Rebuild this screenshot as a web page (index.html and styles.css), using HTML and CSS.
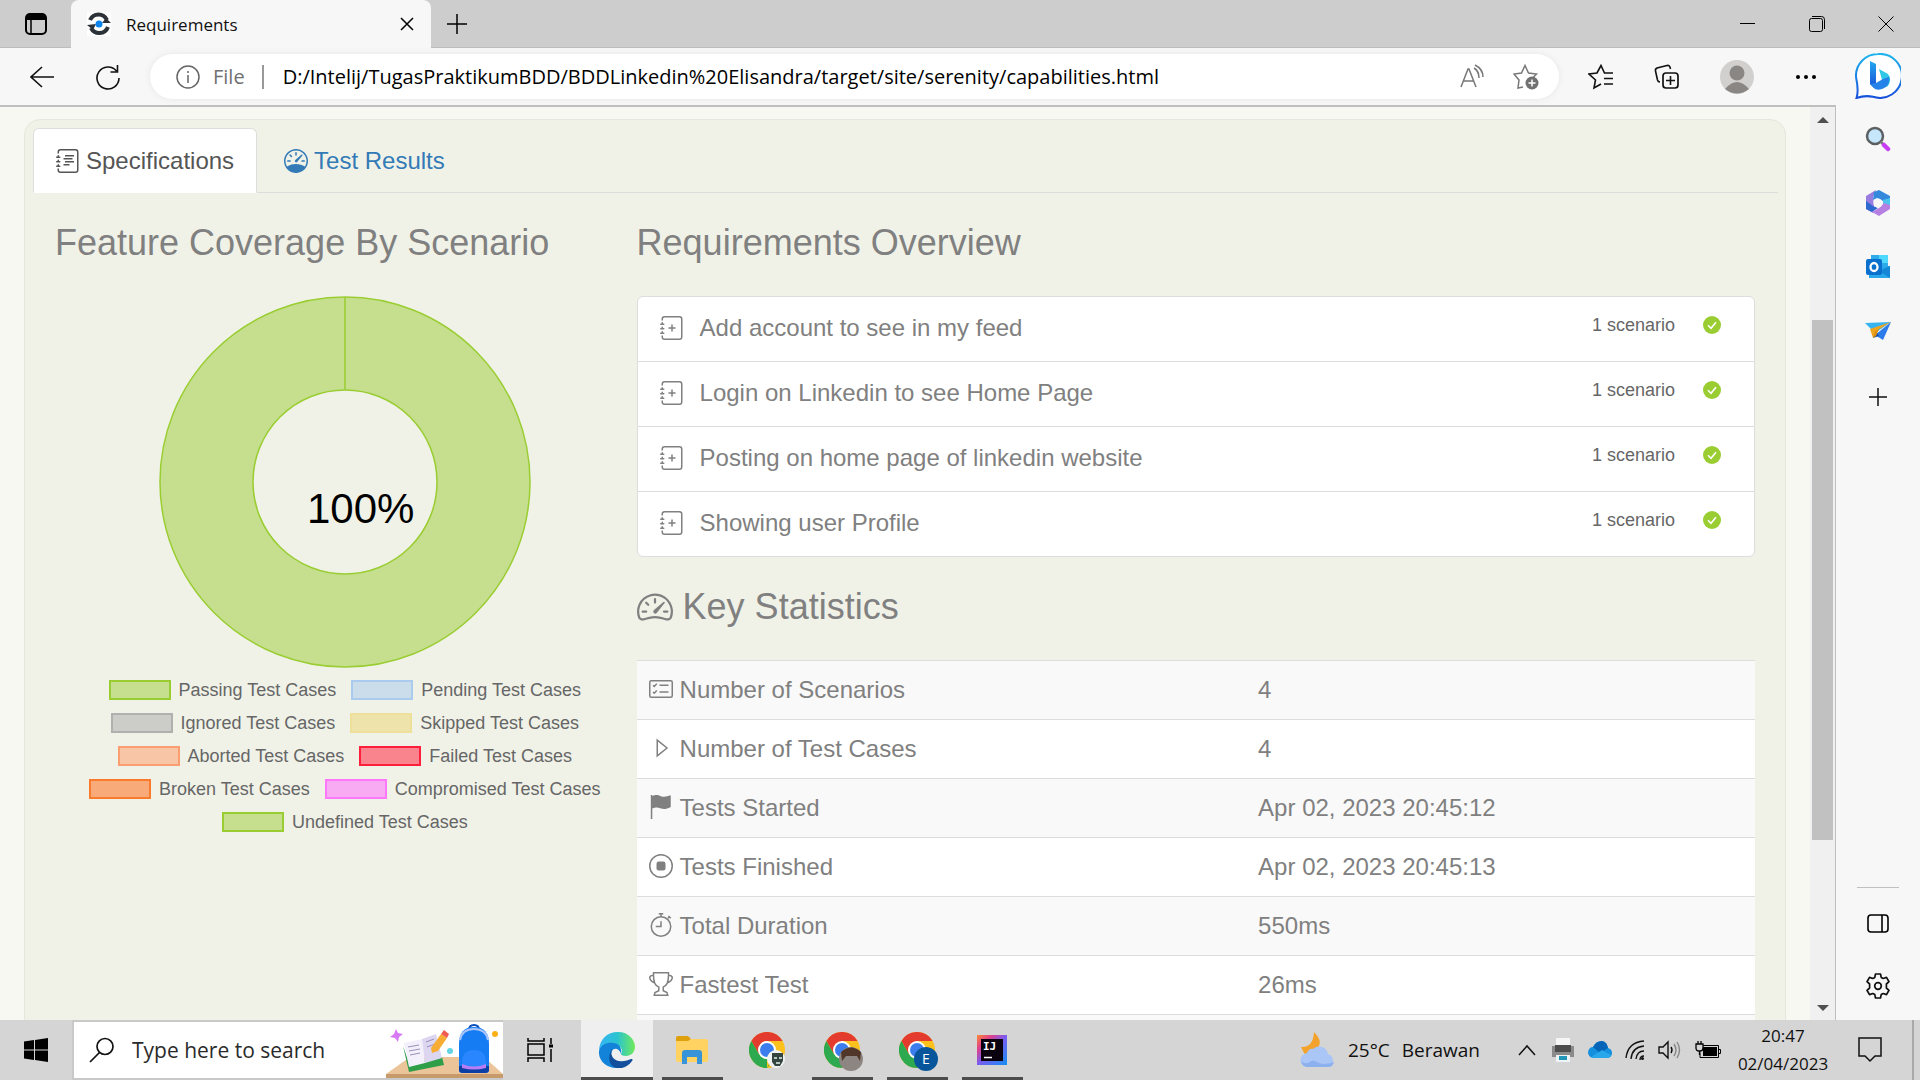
FILE: index.html
```html
<!DOCTYPE html>
<html lang="en">
<head>
<meta charset="utf-8">
<title>Requirements</title>
<link rel="stylesheet" href="styles.css">
</head>
<body>
<svg class="defs" aria-hidden="true">
  <symbol id="journal" viewBox="0 0 16 16"><path d="M3 0h10a2 2 0 0 1 2 2v12a2 2 0 0 1-2 2H3a2 2 0 0 1-2-2v-1h1v1a1 1 0 0 0 1 1h10a1 1 0 0 0 1-1V2a1 1 0 0 0-1-1H3a1 1 0 0 0-1 1v1H1V2a2 2 0 0 1 2-2z"/><path d="M1 5v-.5a.5.5 0 0 1 1 0V5h.5a.5.5 0 0 1 0 1h-2a.5.5 0 0 1 0-1H1zm0 3v-.5a.5.5 0 0 1 1 0V8h.5a.5.5 0 0 1 0 1h-2a.5.5 0 0 1 0-1H1zm0 3v-.5a.5.5 0 0 1 1 0v.5h.5a.5.5 0 0 1 0 1h-2a.5.5 0 0 1 0-1H1z"/></symbol>
  <symbol id="journal-plus" viewBox="0 0 16 16"><use href="#journal"/><path d="M8 5.500a.5.5 0 0 1 .5.5v1.500H10a.5.5 0 0 1 0 1H8.500V10a.5.5 0 0 1-1 0V8.500H6a.5.5 0 0 1 0-1h1.500V6a.5.5 0 0 1 .5-.5z"/></symbol>
  <symbol id="check" viewBox="0 0 18 18"><circle cx="9" cy="9" r="9" fill="#9acd32"/><path d="M5 9.200l3 3 5-6" fill="none" stroke="#fff" stroke-width="1.600"/></symbol>
  <symbol id="chrome" viewBox="0 0 36 36"><circle cx="18" cy="18" r="18" fill="#fbc11c"/><path d="M2.400 9A18 18 0 0 1 33.600 9H18L10.200 22.500z" fill="#e33b2e"/><path d="M2.400 9L10.200 22.500L18 27h7.800L18 36A18 18 0 0 1 2.400 9z" fill="#2da94f"/><path d="M18 36l7.800-13.500L18 20z" fill="#fbc11c"/><circle cx="18" cy="18" r="9" fill="#fff"/><circle cx="18" cy="18" r="7" fill="#3b7ded"/></symbol>
</svg>

<header class="titlebar">
  <button class="tab-actions" aria-label="Tab actions"><svg width="22" height="22" viewBox="0 0 22 22"><rect x="1" y="1" width="20" height="20" rx="4" fill="none" stroke="#000" stroke-width="2"/><path d="M2 2h18v5H2z"/><path d="M6 6v14" stroke="#000" stroke-width="1.500"/></svg></button>
  <div class="browser-tab">
    <svg width="24" height="24" viewBox="0 0 24 24"><rect width="24" height="24" fill="#fff"/><path d="M20 8A9.500 10 0 0 0 3 8M21 15A9.500 10 0 0 1 4 16" fill="none" stroke="#2d3238" stroke-width="4"/><path d="M0 13l9-1-3 6zM24 11l-9 0 4-5z" fill="#2d3238"/><circle cx="12" cy="12" r="3.500" fill="#0b84ee"/></svg>
    <span class="browser-tab-title">Requirements</span>
    <button aria-label="Close tab"><svg width="14" height="14" viewBox="0 0 14 14"><path d="M1 1l12 12M13 1L1 13" stroke="#000" stroke-width="1.500"/></svg></button>
  </div>
  <button class="new-tab" aria-label="New tab"><svg width="22" height="22" viewBox="0 0 22 22"><path d="M11 1v20M1 11h20" stroke="#000" stroke-width="1.500"/></svg></button>
  <div class="window-controls">
    <button aria-label="Minimize"><svg width="16" height="16" viewBox="0 0 16 16"><path d="M0 7.500h15" stroke="#000"/></svg></button>
    <button aria-label="Restore"><svg width="16" height="16" viewBox="0 0 16 16"><rect x=".5" y="2.500" width="13" height="13" rx="2" fill="none" stroke="#000"/><path d="M3 .5h9.500a3 3 0 0 1 3 3V13" fill="none" stroke="#000"/></svg></button>
    <button aria-label="Close"><svg width="16" height="16" viewBox="0 0 16 16"><path d="M.5.5l15 15M15.500.5l-15 15" stroke="#000"/></svg></button>
  </div>
</header>

<div class="browser">
  <div class="viewport">
    <nav class="toolbar">
      <button aria-label="Back"><svg width="24" height="24" viewBox="0 0 24 24"><path d="M12 2L1 12l11 10M1 12h23" fill="none" stroke="#111" stroke-width="1.600"/></svg></button>
      <button class="refresh" aria-label="Refresh"><svg width="26" height="26" viewBox="0 0 26 26"><path d="M22.500 1v7H15.500M21.500 7A11 11 0 1 0 24 14" fill="none" stroke="#111" stroke-width="1.600"/></svg></button>
      <div class="address">
        <svg width="24" height="24" viewBox="0 0 24 24"><circle cx="12" cy="12" r="11" fill="none" stroke="#666" stroke-width="1.500"/><path d="M12 10v8M12 6v2" stroke="#666" stroke-width="1.500"/></svg>
        <label class="scheme" for="url">File</label>
        <input id="url" class="url" type="text" value="D:/Intelij/TugasPraktikumBDD/BDDLinkedin%20Elisandra/target/site/serenity/capabilities.html">
        <button aria-label="Read aloud"><svg width="26" height="26" viewBox="0 0 26 26"><path d="M2 23L9 5h1l7 18M4.500 17h10M15 4q5 3 5 10M16 1q8 4 8 12" fill="none" stroke="#777" stroke-width="1.500"/></svg></button>
        <button class="add-favorite" aria-label="Add to favorites"><svg width="26" height="26" viewBox="0 0 26 26"><path d="M10 23l-5 1 1-8-5-6 7.500-1L12 1.500l3.500 7.500 8 1-3 3" fill="none" stroke="#777" stroke-width="1.500"/><circle cx="19" cy="19" r="6.500" fill="#717171"/><path d="M19 15.500v7M15.500 19h7" stroke="#fff" stroke-width="1.500"/></svg></button>
      </div>
      <div class="toolbar-actions">
        <button aria-label="Favorites"><svg width="26" height="26" viewBox="0 0 26 26"><path d="M13 20l-7 4 1.500-8L1 10l8-1 4-7.500L16.500 9H25M16 14.500h9M16 20h9" fill="none" stroke="#111" stroke-width="1.600"/></svg></button>
        <button aria-label="Collections"><svg width="26" height="26" viewBox="0 0 26 26"><path d="M6 18Q4 18 3.500 16L1.500 7q-.5-2 1.500-3l10-2.500q2-.5 3 1.500l.5 2" fill="none" stroke="#111" stroke-width="1.600"/><rect x="9" y="9" width="15" height="15" rx="3" fill="none" stroke="#111" stroke-width="1.700"/><path d="M16.500 12v9M12 16.500h9" stroke="#111" stroke-width="1.600"/></svg></button>
        <button aria-label="Profile"><svg width="34" height="34" viewBox="0 0 34 34"><circle cx="17" cy="17" r="17" fill="#d2d0ce"/><circle cx="17" cy="13" r="7.500" fill="#8a8683"/><path d="M5 29q12-14 24 0-12 9-24 0z" fill="#8a8683"/></svg></button>
        <button class="more" aria-label="More"><svg width="20" height="6" viewBox="0 0 20 6"><circle cx="2" cy="3" r="2"/><circle cx="10" cy="3" r="2"/><circle cx="18" cy="3" r="2"/></svg></button>
      </div>
    </nav>

    <div class="page">
      <main class="page-body">
        <section class="panel">
          <ul class="tabs">
            <li><a class="tab tab-active" href="#specifications"><svg width="24" height="24" viewBox="0 0 16 16" fill="currentColor"><use href="#journal"/><path d="M6 4h6v1H6zM5 6h6v1H5zM6 8h6v1H6zM5 10h4v1H5z"/></svg>Specifications</a></li>
            <li><a class="tab" href="#tests"><svg width="24" height="24" viewBox="0 0 16 16" fill="currentColor"><path d="M8 2a.5.5 0 0 1 .5.5V4a.5.5 0 0 1-1 0V2.500A.5.5 0 0 1 8 2zM3.732 3.732a.5.5 0 0 1 .707 0l.915.914a.5.5 0 1 1-.708.708l-.914-.915a.5.5 0 0 1 0-.707zM2 8a.5.5 0 0 1 .5-.5h1.586a.5.5 0 0 1 0 1H2.500A.5.5 0 0 1 2 8zm9.500 0a.5.5 0 0 1 .5-.5h1.500a.5.5 0 0 1 0 1H12a.5.5 0 0 1-.5-.5zm.754-4.246a.389.389 0 0 0-.527-.02L7.547 7.310A.91.91 0 1 0 8.850 8.569l3.434-4.297a.389.389 0 0 0-.029-.518z"/><path fill-rule="evenodd" d="M6.664 15.889A8 8 0 1 1 9.336.11a8 8 0 0 1-2.672 15.780zm-4.665-4.283A11.945 11.945 0 0 1 8 10c2.186 0 4.236.585 6.001 1.606a7 7 0 1 0-12.002 0z"/></svg>Test Results</a></li>
          </ul>
          <div class="columns">
            <section class="coverage">
              <h2>Feature Coverage By Scenario</h2>
              <svg class="donut" viewBox="0 0 372 372" role="img" aria-label="100%">
                <path d="M186 1a185 185 0 1 1 0 370a185 185 0 1 1 0-370zM186 94a92 92 0 1 0 0 184a92 92 0 1 0 0-184z" fill="#c6df8f" fill-rule="evenodd" stroke="#9acd32" stroke-width="1.500"/>
                <path d="M186 1v93" stroke="#9acd32" stroke-width="1.500"/>
                <text x="148" y="227" font-size="42">100%</text>
              </svg>
              <div class="legend">
                <div class="legend-row"><span><i class="passing"></i>Passing Test Cases</span><span><i class="pending"></i>Pending Test Cases</span></div>
                <div class="legend-row"><span><i class="ignored"></i>Ignored Test Cases</span><span><i class="skipped"></i>Skipped Test Cases</span></div>
                <div class="legend-row"><span><i class="aborted"></i>Aborted Test Cases</span><span><i class="failed"></i>Failed Test Cases</span></div>
                <div class="legend-row"><span><i class="broken"></i>Broken Test Cases</span><span><i class="compromised"></i>Compromised Test Cases</span></div>
                <div class="legend-row"><span><i class="passing"></i>Undefined Test Cases</span></div>
              </div>
            </section>
            <section class="overview">
              <h2>Requirements Overview</h2>
              <ul class="features">
                <li><a href="#f1"><svg width="24" height="24" fill="currentColor"><use href="#journal-plus"/></svg>Add account to see in my feed</a><span class="count">1 scenario</span><svg class="result" width="18" height="18"><use href="#check"/></svg></li>
                <li><a href="#f2"><svg width="24" height="24" fill="currentColor"><use href="#journal-plus"/></svg>Login on Linkedin to see Home Page</a><span class="count">1 scenario</span><svg class="result" width="18" height="18"><use href="#check"/></svg></li>
                <li><a href="#f3"><svg width="24" height="24" fill="currentColor"><use href="#journal-plus"/></svg>Posting on home page of linkedin website</a><span class="count">1 scenario</span><svg class="result" width="18" height="18"><use href="#check"/></svg></li>
                <li><a href="#f4"><svg width="24" height="24" fill="currentColor"><use href="#journal-plus"/></svg>Showing user Profile</a><span class="count">1 scenario</span><svg class="result" width="18" height="18"><use href="#check"/></svg></li>
              </ul>
              <h2 class="stats-title"><svg width="36" height="36" viewBox="0 0 16 16" fill="currentColor"><path d="M8 4a.5.5 0 0 1 .5.5V6a.5.5 0 0 1-1 0V4.500A.5.5 0 0 1 8 4zM3.732 5.732a.5.5 0 0 1 .707 0l.915.914a.5.5 0 1 1-.708.708l-.914-.915a.5.5 0 0 1 0-.707zM2 10a.5.5 0 0 1 .5-.5h1.586a.5.5 0 0 1 0 1H2.500A.5.5 0 0 1 2 10zm9.500 0a.5.5 0 0 1 .5-.5h1.500a.5.5 0 0 1 0 1H12a.5.5 0 0 1-.5-.5zm.754-4.246a.389.389 0 0 0-.527-.02L7.547 9.310a.91.91 0 1 0 1.302 1.258l3.434-4.297a.389.389 0 0 0-.029-.518z"/><path fill-rule="evenodd" d="M0 10a8 8 0 1 1 15.547 2.661c-.442 1.253-1.845 1.602-2.932 1.250C11.309 13.488 9.475 13 8 13c-1.474 0-3.310.488-4.615.911-1.087.352-2.490.003-2.932-1.250A7.988 7.988 0 0 1 0 10zm8-7a7 7 0 0 0-6.603 9.329c.203.575.923.876 1.680.63C4.397 12.533 6.358 12 8 12s3.604.532 4.923.96c.757.245 1.477-.056 1.680-.631A7 7 0 0 0 8 3z"/></svg>Key Statistics</h2>
              <table class="stats">
                <tbody>
                <tr><th scope="row"><svg width="24" height="24" viewBox="0 0 16 16" class="line"><rect x=".5" y="2.500" width="15" height="11" rx="1"/><path d="M7 5.500h6M7 10h6M2.700 5.500l.8.8 1.700-1.800M2.700 10l.8.8L5.200 9"/></svg>Number of Scenarios</th><td>4</td></tr>
                <tr><th scope="row"><svg width="24" height="24" viewBox="0 0 16 16" class="line"><path d="M5.500 2.700v10.600L12 8z"/></svg>Number of Test Cases</th><td>4</td></tr>
                <tr><th scope="row"><svg width="24" height="24" viewBox="0 0 16 16" fill="currentColor"><path d="M1.200 0h1v.6C5-.3 6 .1 8 .8s4 .2 6.500-.6V8C11 9.800 9.500 9.500 7.500 8.800S4.500 8.200 2.200 9v7h-1z"/></svg>Tests Started</th><td>Apr 02, 2023 20:45:12</td></tr>
                <tr><th scope="row"><svg width="24" height="24" viewBox="0 0 16 16" class="line"><circle cx="8" cy="8" r="7.500"/><rect x="5" y="5" width="6" height="6" rx="1.500" fill="currentColor" stroke="none"/></svg>Tests Finished</th><td>Apr 02, 2023 20:45:13</td></tr>
                <tr><th scope="row"><svg width="24" height="24" viewBox="0 0 16 16" class="line"><circle cx="8" cy="9" r="6.500"/><path d="M8 5.500V9H4.500M6.500.5h3M8 .5v2M12.500 3.500l1.500-1M13 2l1.500 1.500"/></svg>Total Duration</th><td>550ms</td></tr>
                <tr><th scope="row"><svg width="24" height="24" viewBox="0 0 16 16" class="line"><path d="M3 .5h10q.3 8.500-3.500 9.500v2.500l2.500 1.200.5 1.800h-9l.5-1.800 2.500-1.200V10Q2.700 9 3 .5zM3 2.500C.3 2 0 4 1.200 5.500S3.300 7 4 7.500M13 2.500c2.700-.5 3 1.500 1.800 3S12.700 7 12 7.500"/></svg>Fastest Test</th><td>26ms</td></tr>
                <tr><th scope="row"></th><td></td></tr>
                </tbody>
              </table>
            </section>
          </div>
        </section>
      </main>
      <div class="scrollbar" aria-hidden="true">
        <svg width="12" height="6" viewBox="0 0 12 6"><path d="M0 6l6-6 6 6z" fill="#505050"/></svg>
        <div class="track"><div class="thumb"></div></div>
        <svg width="12" height="6" viewBox="0 0 12 6"><path d="M0 0l6 6 6-6z" fill="#505050"/></svg>
      </div>
    </div>
  </div>

  <aside class="sidebar">
    <button class="bing" aria-label="Bing"><svg width="46" height="46" viewBox="0 0 46 46"><defs><linearGradient id="ring" x1="0" y1="0" x2="0" y2="1"><stop offset="0" stop-color="#1eb5ee"/><stop offset="1" stop-color="#174fdb"/></linearGradient><linearGradient id="b" x1="0" y1="0" x2="0" y2="1"><stop offset="0" stop-color="#24a9ef"/><stop offset="1" stop-color="#1850d8"/></linearGradient></defs><path d="M23 1a22 22 0 1 1-5 42.800Q10 42 1.500 45 4 38 1 24A22 22 0 0 1 23 1z" fill="#fff" stroke="url(#ring)" stroke-width="2"/><path d="M15 8l6 3v20l-2 4-4-4z" fill="url(#b)"/><path d="M24 16l9 5q5 6-1 13l-5-7z" fill="#2fc7e6"/><path d="M15 31l6-1 7-4 6-2q1 6-3 10-6 4-11 2z" fill="#2482e8"/></svg></button>
    <button aria-label="Search"><svg width="26" height="26" viewBox="0 0 26 26"><circle cx="10" cy="10" r="8" fill="#c5e6fb" stroke="#5d6063" stroke-width="2.500"/><path d="M15.500 15.500l3 3" stroke="#77797c" stroke-width="2.500"/><path d="M19 19l4 4" stroke="#c63df2" stroke-width="4.500" stroke-linecap="round"/></svg></button>
    <button aria-label="Microsoft 365"><svg width="26" height="26" viewBox="0 0 26 26"><path d="M11 0L1 6v13l7 4 1-6-1-10z" fill="#987ce0"/><path d="M9 2l5-2 11 6v10l-7-5-6-3-4 2z" fill="#3489dc"/><path d="M25 8v9l-7-3v-4z" fill="#4cc4ee"/><path d="M1 11l7 5 5 2-6 4-6-3z" fill="#2e69d1"/><path d="M25 15v4l-11 7-7-4 7-4 5-5z" fill="#b580e2"/><circle cx="13" cy="13" r="4.500" fill="#f7f7f7"/></svg></button>
    <button aria-label="Outlook"><svg width="26" height="26" viewBox="0 0 26 26"><path d="M6 1h17v14H6z" fill="#2faaea"/><path d="M14 1h9v8h-9z" fill="#50d9ff"/><path d="M4 12h21v12H4z" fill="#28a8ea"/><path d="M25 12v12L14 17z" fill="#1487d6"/><rect x="1" y="5" width="16" height="16" rx="2" fill="#0a70cd"/><ellipse cx="9" cy="13" rx="3.500" ry="4" fill="none" stroke="#fff" stroke-width="2.300"/></svg></button>
    <button aria-label="Drop"><svg width="26" height="26" viewBox="0 0 26 26"><path d="M0 5l26-1-13 9-7-2z" fill="#36b5f2"/><path d="M26 4L18 22l-8-5z" fill="#2c7bea"/><path d="M26 4L5 11l3 9 3-7z" fill="#f0a41c"/><path d="M11 13l3 5-6 2z" fill="#174ea2"/><path d="M8 20l2-7 4-2-3 7z" fill="#dc8f10"/></svg></button>
    <button class="add-app" aria-label="Add"><svg width="18" height="18" viewBox="0 0 18 18"><path d="M9 0v18M0 9h18" stroke="#111" stroke-width="1.500"/></svg></button>
    <div class="sidebar-bottom">
      <button aria-label="Hide sidebar"><svg width="22" height="20" viewBox="0 0 22 20"><rect x="1" y="1" width="20" height="17" rx="3" fill="none" stroke="#000" stroke-width="1.600"/><path d="M15 1v17" stroke="#000" stroke-width="1.600"/></svg></button>
      <button aria-label="Settings"><svg width="26" height="26" viewBox="0 0 26 26" fill="none" stroke="#111" stroke-width="1.700"><path d="M10.500 1h5l.7 3.400 2 1.100 3.300-1.100 2.500 4.300L21.400 11v4l2.600 2.300-2.500 4.300-3.300-1.100-2 1.100-.7 3.400h-5l-.7-3.400-2-1.100-3.300 1.100L2 17.300 4.600 15v-4L2 8.700l2.500-4.300 3.300 1.100 2-1.100z" stroke-linejoin="round"/><circle cx="13" cy="13" r="3.300"/></svg></button>
    </div>
  </aside>
</div>

<footer class="taskbar">
  <button class="start" aria-label="Start"><svg width="24" height="24" viewBox="0 0 24 24"><path d="M0 3.500L10 2v9.500H0zM11 2l13-2v11.500H11zM0 12.500h10V22L0 20.500zM11 12.500h13V24l-13-2z"/></svg></button>
  <div class="search">
    <svg width="26" height="26" viewBox="0 0 26 26"><circle cx="16" cy="9.500" r="8" fill="none" stroke="#111" stroke-width="1.700"/><path d="M10.500 15.500L1 25" stroke="#111" stroke-width="1.700"/></svg>
    <input type="text" aria-label="Search" placeholder="Type here to search">
    <svg class="art" width="117" height="56" viewBox="0 0 117 56"><path d="M0 52L24 35h74l19 17v4H0z" fill="#ecc49a"/><path d="M0 52h117v4H0z" fill="#c79a6c"/><path d="M10 7l2 4 5 1-4 3-1 5-3-4-5-1 4-3z" fill="#d978f5"/><path d="M17 24l6 26 35-7-2-8-33 6z" fill="#2f9e48"/><path d="M18 21l18-4 3 24-16 4z" fill="#f4f0fb"/><path d="M36 17l14-5 6 24-17 5z" fill="#dcd6f0"/><path d="M22 25l11-2M23 29l11-2M24 33l10-2M40 20l8-3M41 25l8-3" stroke="#998fb8"/><path d="M45 26l10-14 6 4-9 13-6 2z" fill="#f7ac34"/><path d="M55 12l3-4 5 4-2 4z" fill="#f05c50"/><circle cx="64" cy="29" r="3" fill="#63d4e6"/><circle cx="109" cy="12" r="3" fill="#fbb116"/><path d="M83 8q0-5 5-5t5 5" fill="none" stroke="#0b4fbd" stroke-width="2"/><path d="M73 48V22q0-17 15-17t15 17v26q0 3-4 3H77q-4 0-4-3z" fill="#157cf3"/><path d="M74 18Q76 7 88 7t14 11" fill="none" stroke="#a9c5fb" stroke-width="2"/><path d="M73 44h30v4q0 3-4 3H77q-4 0-4-3z" fill="#0b3fa4"/><path d="M76 41q0-13 12-13t12 13v5H76z" fill="#2a86ff"/><path d="M76 42q12 5 24 0v4q-12 3-24 0z" fill="#b87cf4"/></svg>
  </div>
  <button class="task-view" aria-label="Task view"><svg width="26" height="24" viewBox="0 0 26 24" fill="none" stroke="#000" stroke-width="1.500"><path d="M1 0v3h16V0M1 24v-4h16v4M1 6h16v11H1zM24 0v6M24 11v13"/><path d="M22 8h4" stroke-width="3"/></svg></button>
  <div class="apps">
    <button class="app app-active" aria-label="Edge"><svg width="36" height="36" viewBox="0 0 36 36"><defs><linearGradient id="e1" x1="0" y1="0" x2="1" y2="0"><stop offset="0" stop-color="#35b5f4"/><stop offset=".5" stop-color="#2ac3d2"/><stop offset="1" stop-color="#6fea5a"/></linearGradient></defs><path d="M0 18C1 7 8 0 19 0c11 0 17 8 17 15 0 5-4 9-9 9-3 0-5-1-5-2 3-4-1-9-6-9C8 13 3 16 0 18z" fill="url(#e1)"/><path d="M0 19C2 12 9 10 15 11c6 1 8 6 7 11-1-5-7-7-9-3-4 7 2 14 11 16-14 4-25-5-24-16z" fill="#1283d8"/><path d="M14 16c-4 6 0 12 6 13 5 1 9-1 12-2 2 0 2 1 1 2-4 6-11 8-15 7C9 34 8 23 14 16z" fill="#134f9c"/></svg></button>
    <button class="app app-open" aria-label="File Explorer"><svg width="32" height="28" viewBox="0 0 32 28"><path d="M0 2q0-2 2-2h10l3 3-2 4H0z" fill="#dfa00e"/><path d="M0 5h12l3-2h15q2 0 2 2v19q0 2-2 2H2q-2 0-2-2z" fill="#ffd262"/><path d="M6 28V17q0-3 3-3h14q3 0 3 3v11h-5v-7H11v7z" fill="#3893d8"/></svg></button>
    <button class="app" aria-label="Chrome"><svg width="40" height="40" viewBox="-2 -2 40 40"><use href="#chrome" width="36" height="36"/><circle cx="27" cy="27" r="9" fill="#f1f3f2"/><path d="M23 21h11v8l-3 5h-5l-3-4z" fill="#34453f"/><path d="M25 25h3v2h-3zM30 25h3v2h-3zM27 30h4v2h-4z" fill="#b7c7bf"/></svg></button>
    <button class="app app-open" aria-label="Chrome, second profile"><svg width="42" height="42" viewBox="-3 -3 42 42"><use href="#chrome" width="36" height="36"/><circle cx="27" cy="27" r="12" fill="#8d8581"/><path d="M17 20q10-9 20 0l-1 9-3-5H22l-4 5z" fill="#503629"/></svg></button>
    <button class="app app-open" aria-label="Chrome, profile E"><svg width="42" height="42" viewBox="-3 -3 42 42"><use href="#chrome" width="36" height="36"/><circle cx="27" cy="27" r="12" fill="#07569b"/><text x="27" y="32" text-anchor="middle" font-size="14" fill="#fff">E</text></svg></button>
    <button class="app app-open" aria-label="IntelliJ IDEA"><svg width="30" height="30" viewBox="0 0 30 30"><defs><linearGradient id="ij" x1="0" y1="0" x2="1" y2="1"><stop offset="0" stop-color="#fc8a35"/><stop offset=".25" stop-color="#e0408a"/><stop offset=".5" stop-color="#7a5cf0"/><stop offset="1" stop-color="#1290f5"/></linearGradient></defs><rect width="30" height="30" fill="url(#ij)"/><rect x="4" y="4" width="22" height="22" fill="#0b0210"/><text x="6" y="15" class="ij" font-size="11" fill="#fff">IJ</text><path d="M7 22.500h8" stroke="#fff" stroke-width="1.500"/></svg></button>
  </div>
  <div class="tray">
    <button class="weather"><svg width="36" height="36" viewBox="0 0 36 36"><path d="M14 0q8 8 5 14T8 25q-3-1-7-10 12 1 13-15z" fill="#f3a32b"/><path d="M8 35a7 7 0 0 1-1-14 5 5 0 0 1 6-4 9 9 0 0 1 15 5 7 7 0 0 1 1 13z" fill="#a9c6f6"/><path d="M8 35q-6 0-7-6 4 4 9 1 3-3 7 0 6 4 17 0-1 5-6 5z" fill="#8db0ee"/></svg><span>25°C</span><span>Berawan</span></button>
    <button class="chevron" aria-label="Hidden icons"><svg width="18" height="12" viewBox="0 0 18 12"><path d="M1 11l8-9 8 9" fill="none" stroke="#111" stroke-width="1.500"/></svg></button>
    <div class="tray-icons">
      <svg width="24" height="24" viewBox="0 0 24 24"><path d="M5 0h14v9H5z" fill="#f5f5f5"/><path d="M1 8h22v11H1z" fill="#8a8a8a"/><path d="M4 7h16v7H4z" fill="#4d4d4d"/><path d="M5 17h14v7H5z" fill="#eef4f6"/><path d="M8 18h8v4H8z" fill="#2196b8"/></svg>
      <svg width="24" height="18" viewBox="0 0 24 18"><path d="M5 17q-5-1-5-6 1-5 5-5 3-6 9-6 5 1 6 7 4 1 4 5t-4 5z" fill="#1490df"/><path d="M5 6q3-6 9-6 5 1 6 7l-8 5z" fill="#0364b8"/><path d="M3 16L14 9l9 5q-1 3-4 3H6z" fill="#28a8ea"/></svg>
      <svg width="20" height="24" viewBox="0 0 20 24" fill="none" stroke="#111" stroke-width="1.400"><path d="M1 20Q3 4 19 3M6 21Q7 9 19 8M11 21q1-8 8-8M15 22q0-4 4-4"/><circle cx="17.500" cy="20.500" r="1.500" fill="#111" stroke="none"/></svg>
      <svg width="24" height="20" viewBox="0 0 24 20" fill="none" stroke="#111" stroke-width="1.400"><path d="M1 7h4l5-5v16l-5-5H1zM13 7q2 3 0 6"/><path d="M16 4q4 6 0 12M19 2q5 8 0 16" stroke="#888"/></svg>
      <svg width="26" height="18" viewBox="0 0 26 18"><path d="M8 6h14v9H8z"/><path d="M8 4.500h15.500v12H5v-5M24 8.500h1.500v4H24" fill="none" stroke="#000"/><path d="M1 3h7v4q0 3-3 3h-1q-3 0-3-3zM3 3V0M6 3V0M4.500 10v4" fill="#d5d5d5" stroke="#000" stroke-width="1.300"/></svg>
    </div>
    <button class="clock"><time>20:47</time><time>02/04/2023</time></button>
    <button class="notifications" aria-label="Notifications"><svg width="24" height="26" viewBox="0 0 24 26"><path d="M1 1h22v18h-6l-5 5-5-5H1z" fill="none" stroke="#111" stroke-width="1.500"/></svg></button>
    <span class="show-desktop"></span>
  </div>
</footer>
</body>
</html>
```
FILE: styles.css
```css
* { box-sizing: border-box; }
body {
  margin: 0;
  height: 100vh;
  overflow: hidden;
  display: flex;
  flex-direction: column;
  background: #f7f7f7;
  font-family: "Open Sans", "Noto Sans", sans-serif;
  color: #111;
}
button {
  display: flex;
  align-items: center;
  justify-content: center;
  padding: 0;
  border: 0;
  background: none;
  font: inherit;
  color: inherit;
}
input {
  min-width: 0;
  padding: 0;
  border: 0;
  background: none;
  font: inherit;
  color: inherit;
  outline: 0;
}
svg { display: block; flex: none; }
ul { margin: 0; padding: 0; list-style: none; }
a { color: inherit; text-decoration: none; }
.defs { position: absolute; width: 0; height: 0; }

/* Window title bar */
.titlebar {
  flex: none;
  display: flex;
  height: 48px;
  background: #cdcdcd;
  box-shadow: inset 0 -1px #bcbcbc;
}
.tab-actions { width: 71px; }
.browser-tab {
  display: flex;
  align-items: center;
  width: 360px;
  padding: 0 17px 0 16px;
  border-radius: 8px 8px 0 0;
  background: #f7f7f7;
}
.browser-tab-title { flex: 1; padding-left: 15px; font-size: 17px; }
.new-tab { width: 52px; }
.window-controls { display: flex; margin-left: auto; }
.window-controls button { width: 69px; }

/* Browser frame */
.browser { flex: 1; min-height: 0; display: flex; }
.viewport { flex: 1; min-width: 0; display: flex; flex-direction: column; }
.toolbar {
  flex: none;
  display: flex;
  align-items: center;
  height: 59px;
  padding-left: 30px;
  border-bottom: 2px solid #bfbfbf;
}
.refresh { margin: 0 29px 0 41px; }
.address {
  flex: 1;
  display: flex;
  align-items: center;
  height: 45px;
  padding: 0 20px 0 26px;
  border-radius: 24px;
  background: #fff;
  box-shadow: 0 0 6px #e6e6e6;
  font-size: 20px;
}
.scheme {
  margin-left: 13px;
  padding-right: 17px;
  border-right: 2px solid #999;
  line-height: 24px;
  color: #707070;
}
.url { flex: 1; margin-left: 19px; color: #000; }
.add-favorite { margin-left: 28px; }
.toolbar-actions {
  display: flex;
  align-items: center;
  gap: 40px;
  padding: 0 20px 0 29px;
}
.more { margin-left: 2px; }

/* Page area */
.page {
  flex: 1;
  min-height: 0;
  display: flex;
  border-right: 1px solid #bfbfbf;
  background: #f7f8f2;
}
.page-body {
  flex: 1;
  min-width: 0;
  overflow: hidden;
  padding: 12px 24px 0;
  font-family: "Liberation Sans", Arial, sans-serif;
  font-size: 24px;
  line-height: 34px;
  color: #808080;
}
.panel {
  padding: 8px 7px 0 8px;
  border: 1px solid #e5e7dd;
  border-radius: 16px;
  background: #f0f2e8;
}
.tabs { display: flex; gap: 4px; border-bottom: 1px solid #dddddd; }
.tab {
  display: flex;
  align-items: center;
  gap: 6px;
  height: 65px;
  margin-bottom: -1px;
  padding: 0 22px;
  border: 1px solid transparent;
  color: #337ab7;
}
.tab-active {
  border-color: #dddddd;
  border-bottom-color: #fff;
  border-radius: 6px 6px 0 0;
  background: #fff;
  color: #555;
}
.columns {
  display: grid;
  grid-template-columns: minmax(0, 52fr) minmax(0, 100fr);
  padding: 30px 23px 0 22px;
}
.coverage { padding-right: 2px; }
h2 {
  margin: 0;
  font-size: 36px;
  font-weight: 400;
  line-height: 40px;
}
.donut { width: 372px; height: 372px; margin: 33px auto 12px; }
.legend { font-size: 18px; line-height: 20px; color: #666; }
.legend-row { display: flex; justify-content: center; gap: 15px; margin-bottom: 13px; }
.legend-row span { display: flex; gap: 8px; }
.legend i { width: 62px; height: 20px; border-width: 2px; border-style: solid; }
.passing { background: #c6df8f; border-color: #9acd32; }
.pending { background: #cbddeb; border-color: #abcbee; }
.ignored { background: #cccdc8; border-color: #b0b1ae; }
.skipped { background: #eee3ab; border-color: #eedf9a; }
.aborted { background: #f8c5a6; border-color: #fb9e71; }
.failed { background: #f9848d; border-color: #ff1f3c; }
.broken { background: #f8ab79; border-color: #fb7b2d; }
.compromised { background: #f8abf3; border-color: #ff78fa; }

.features {
  margin-top: 33px;
  border: 1px solid #dddddd;
  border-radius: 6px;
  background: #fff;
}
.features li {
  display: flex;
  align-items: flex-start;
  height: 65px;
  padding: 14px 33px 0 22px;
}
.features li:first-child { height: 64px; }
.features li + li { border-top: 1px solid #dddddd; }
.features a { flex: 1; display: flex; align-items: center; gap: 16px; }
.count { font-size: 18px; line-height: 28px; color: #666; }
.result { margin: 5px 0 0 28px; }
.stats-title { display: flex; align-items: center; gap: 10px; margin-top: 30px; }
.stats { width: 100%; margin-top: 33px; border-collapse: collapse; background: #fff; }
.stats tr { height: 59px; border-top: 1px solid #dddddd; }
.stats tr:nth-child(odd) { background: #f9f9f9; }
.stats th, .stats td { padding: 0 12px; font-weight: 400; text-align: left; }
.stats th { width: 54.5%; }
.stats th svg { display: inline-block; margin-right: 7px; vertical-align: -3px; }
.line { fill: none; stroke: currentColor; stroke-width: 1; }

.scrollbar {
  display: flex;
  flex-direction: column;
  align-items: center;
  width: 25px;
  padding: 10px 0 9px;
  background: #f0f0f0;
}
.track { flex: 1; display: flex; flex-direction: column; margin: 6px 0; }
.track::before { content: ""; flex: 191; }
.track::after { content: ""; flex: 159; }
.thumb { flex: 520; width: 21px; background: #c1c1c1; }

/* Browser sidebar */
.sidebar {
  display: flex;
  flex-direction: column;
  align-items: center;
  gap: 38px;
  width: 84px;
  padding: 5px 0 21px;
}
.bing { margin-bottom: -11px; }
.add-app { margin-top: 6px; }
.sidebar-bottom {
  display: flex;
  flex-direction: column;
  align-items: center;
  gap: 39px;
  width: 42px;
  margin-top: auto;
  padding-top: 26px;
  border-top: 1px solid #c0c0c0;
}

/* Taskbar */
.taskbar {
  flex: none;
  display: flex;
  align-items: stretch;
  height: 60px;
  background: #d5d5d5;
}
.start { width: 72px; }
.search {
  display: flex;
  align-items: center;
  width: 431px;
  padding-left: 15px;
  border: 2px solid #c9c9c9;
  border-right-width: 0;
  background: #fff;
  font-size: 21px;
}
.search input { flex: 1; padding-left: 17px; }
.search input::placeholder { color: #2a2a2a; opacity: 1; }
.task-view { width: 78px; padding-right: 4px; }
.apps { display: flex; gap: 3px; }
.app { position: relative; width: 72px; }
.app-active { background: #efefef; }
.app-active::after, .app-open::after {
  content: "";
  position: absolute;
  right: 5px;
  bottom: 0;
  left: 6px;
  height: 3px;
  background: #4c4c4c;
}
.app-active::after { right: 0; left: 0; }
.app text { font-family: "Open Sans", sans-serif; }
.app .ij { font-family: "DejaVu Sans Mono", monospace; font-weight: 700; }
.tray { display: flex; align-items: center; margin-left: auto; }
.weather { gap: 12px; font-size: 19px; }
.chevron { margin: 0 15px 0 38px; }
.tray-icons { display: flex; align-items: center; gap: 13px; }
.clock {
  flex-direction: column;
  width: 124px;
  font-size: 17px;
  line-height: 28px;
}
.notifications { margin: 0 30px 0 13px; }
.show-desktop { align-self: stretch; width: 8px; border-left: 2px solid #a9a9a9; }
.donut text { font-family: "Liberation Sans", Arial, sans-serif; fill: #000; }
```
